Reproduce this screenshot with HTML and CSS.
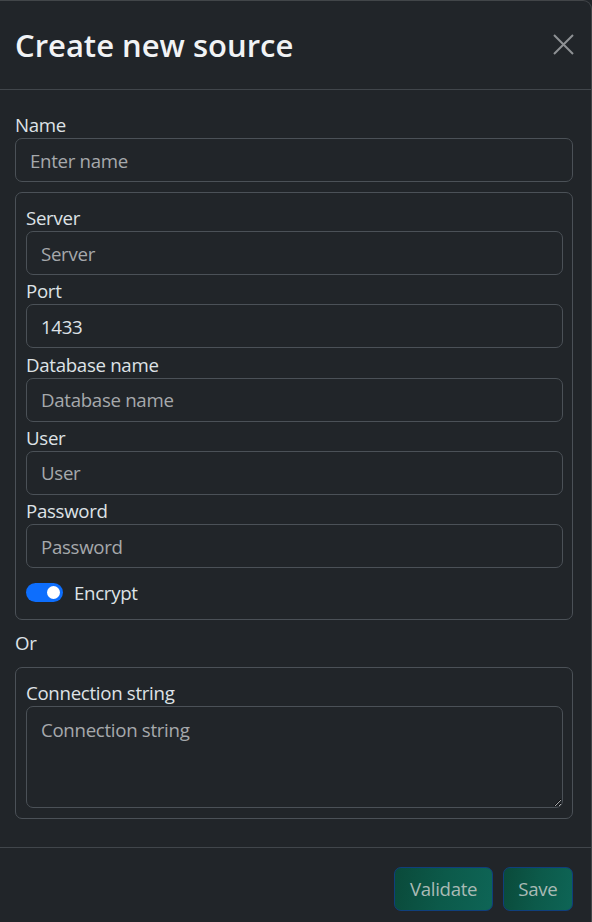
FILE: index.html
```html
<!DOCTYPE html>
<html lang="en">
<head>
<meta charset="utf-8">
<title>Create new source</title>
<link rel="stylesheet" href="styles.css">
</head>
<body>
<div class="modal">
  <div class="modal-header">
    <h1 class="modal-title">Create new source</h1>
    <button class="btn-close" type="button" aria-label="Close">
      <svg width="21" height="21" viewBox="0 0 21 21"><path d="M1 1L20 20M20 1L1 20" stroke="#8e9194" stroke-width="2" fill="none"/></svg>
    </button>
  </div>
  <div class="modal-body">
    <label class="form-label">Name</label>
    <input class="form-control" type="text" placeholder="Enter name">
    <div class="box">
      <div class="group">
        <label class="form-label">Server</label>
        <input class="form-control" type="text" placeholder="Server">
      </div>
      <div class="group">
        <label class="form-label">Port</label>
        <input class="form-control" type="text" value="1433">
      </div>
      <div class="group">
        <label class="form-label">Database name</label>
        <input class="form-control" type="text" placeholder="Database name">
      </div>
      <div class="group">
        <label class="form-label">User</label>
        <input class="form-control" type="text" placeholder="User">
      </div>
      <div class="group">
        <label class="form-label">Password</label>
        <input class="form-control" type="password" placeholder="Password">
      </div>
      <div class="form-check">
        <span class="switch"><span class="knob"></span></span>
        <label class="check-label">Encrypt</label>
      </div>
    </div>
    <div class="or">Or</div>
    <div class="box box-conn">
      <label class="form-label">Connection string</label>
      <textarea class="form-control textarea" placeholder="Connection string"></textarea>
    </div>
  </div>
  <div class="modal-footer">
    <button class="btn" type="button">Validate</button>
    <button class="btn" type="button">Save</button>
  </div>
</div>
</body>
</html>
```
FILE: styles.css
```css
* { box-sizing: border-box; }
html, body {
  margin: 0;
  padding: 0;
  background: #212529;
  height: 100%;
  overflow: hidden;
}
body {
  font-family: "Open Sans", "Noto Sans", sans-serif;
  font-size: 18.67px;
  line-height: 28px;
  letter-spacing: -0.3px;
  color: #dee2e6;
}
.modal {
  width: 592px;
  height: 922px;
  background: #212529;
  border-top: 1px solid rgba(255,255,255,0.15);
  border-right: 1px solid rgba(255,255,255,0.15);
  border-top-right-radius: 9px;
  overflow: hidden;
}
.modal-header {
  height: 89px;
  display: flex;
  align-items: center;
  justify-content: space-between;
  padding: 0 17px 0 15px;
  border-bottom: 1px solid #41464b;
}
.modal-title {
  margin: 0;
  font-size: 31px;
  font-weight: 600;
  line-height: 40px;
  letter-spacing: 0;
  color: #f1f3f5;
  margin-top: 0;
}
.btn-close {
  background: none;
  border: 0;
  padding: 0;
  width: 21px;
  height: 21px;
  margin-top: -1px;
  display: flex;
}
.modal-body {
  padding: 20px 18px 28px 15px;
}
.form-label {
  display: block;
  line-height: 28px;
  padding-top: 1px;
  margin-bottom: -1px;
  color: #dee2e6;
}
.form-control {
  display: block;
  width: 100%;
  height: 44px;
  padding: 0 14px;
  font-family: inherit;
  font-size: 18.67px;
  line-height: 28px;
  letter-spacing: -0.3px;
  color: #dee2e6;
  background: #212529;
  border: 1px solid #4b5157;
  border-radius: 7px;
  outline: none;
}
.form-control::placeholder {
  color: #a6a9ac;
  opacity: 1;
}
.box {
  margin-top: 10px;
  border: 1px solid #4b5157;
  border-radius: 7px;
  padding: 10px 9px 12.5px 10px;
}
.group {
  margin-bottom: 1.33px;
}
.form-check {
  margin-top: 10.5px;
  display: flex;
  align-items: center;
  height: 28px;
}
.switch {
  width: 37px;
  height: 19px;
  border-radius: 10px;
  background: #0d6efd;
  display: flex;
  align-items: center;
  justify-content: flex-end;
  padding-right: 3px;
}
.knob {
  width: 13px;
  height: 13px;
  border-radius: 50%;
  background: #fff;
}
.check-label {
  margin-left: 11px;
  padding-top: 1px;
}
.or {
  margin: 8.5px 0 10px;
  line-height: 28px;
}
.box-conn {
  margin-top: 0;
  padding-bottom: 10px;
}
.textarea {
  height: 102px;
  padding: 9px 14px;
  resize: vertical;
}
.modal-footer {
  display: flex;
  justify-content: flex-end;
  gap: 10px;
  padding: 19px 18px 0 15px;
  border-top: 1px solid #41464b;
}
.btn {
  height: 44px;
  padding: 0 14.5px;
  font-family: inherit;
  font-size: 18.67px;
  line-height: 28px;
  letter-spacing: -0.3px;
  color: #a9bab5;
  background: linear-gradient(100deg, #0a4a3a 0%, #0c5a4a 50%, #0e6556 100%);
  border: 1px solid #0f3f7c;
  border-radius: 7px;
}
```
